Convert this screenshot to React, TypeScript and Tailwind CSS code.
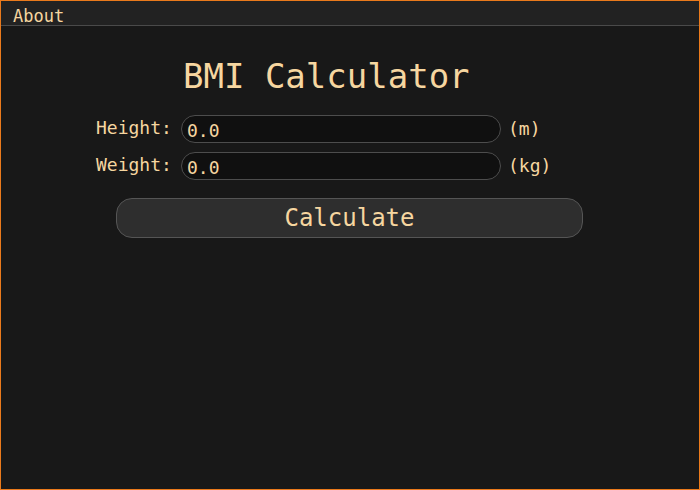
import { useState } from "react";

const mono = { fontFamily: '"DejaVu Sans Mono", monospace' };

function Field({ label, unit, value, onChange }: { label: string; unit: string; value: string; onChange: (v: string) => void }) {
    return (
        <div className="flex items-center h-[28px]">
            <label className="w-[85px] text-[18px] leading-none pb-[3px]">{label}</label>
            <input
                value={value}
                onChange={(e) => onChange(e.target.value)}
                className="w-[320px] h-[28px] rounded-full bg-[#101010] border border-[#4d4d4d] px-[5px] pt-[2px] text-[18px] text-[#f6d6a0] outline-none"
                style={mono}
            />
            <span className="ml-[7px] text-[18px] leading-none">{unit}</span>
        </div>
    );
}

export default function App() {
    const [height, setHeight] = useState("0.0");
    const [weight, setWeight] = useState("0.0");

    return (
        <div className="w-[700px] h-[490px] flex flex-col bg-[#181818] border border-[#ea7a1c] text-[#f6d6a0]" style={mono}>
            <div className="h-[25px] flex items-center bg-[#222222] border-b border-[#4a4a4a] px-[12px]">
                <span className="text-[17px] leading-none pt-[6px]">About</span>
            </div>
            <div className="flex flex-col">
                <h1 className="ml-[182px] mt-[30px] text-[34px] leading-[40px]">BMI Calculator</h1>
                <div className="ml-[95px] mt-[19px] flex flex-col gap-[9px]">
                    <Field label="Height:" unit="(m)" value={height} onChange={setHeight} />
                    <Field label="Weight:" unit="(kg)" value={weight} onChange={setWeight} />
                </div>
                <button className="ml-[115px] mt-[18px] w-[467px] h-[40px] rounded-[16px] bg-[#2e2e2e] border border-[#555555] text-[24px] text-[#f6d6a0] leading-none">
                    Calculate
                </button>
            </div>
        </div>
    );
}
